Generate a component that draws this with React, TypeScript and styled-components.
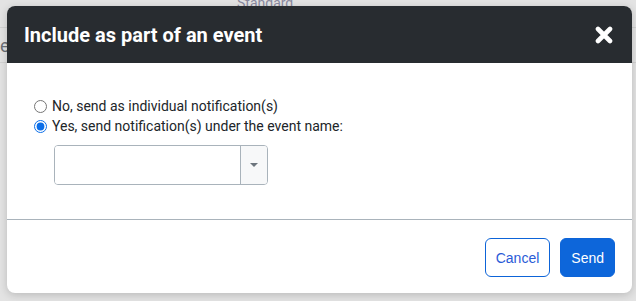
import React from "react";
import styled, { createGlobalStyle } from "styled-components";

const Global = createGlobalStyle`
  html, body { margin: 0; padding: 0; }
  body {
    background: #e3e3e3;
    font-family: Roboto, "Liberation Sans", Arial, sans-serif;
    overflow: hidden;
  }
`;

const Page = styled.div`
  position: relative;
  width: 636px;
  height: 301px;
  overflow: hidden;
  background: #e3e3e3;
`;

const PageHeader = styled.div`
  display: flex;
  height: 27px;
  border-bottom: 1px solid #d2d2d2;
  padding-left: 237px;
`;

const PageHeading = styled.div`
  font-size: 14px;
  color: #8a8aa0;
  margin-top: -5px;
  line-height: 16px;
`;

const PageRow = styled.div`
  height: 34px;
  border-bottom: 1px solid #d2d2d2;
  display: flex;
  align-items: center;
  font-size: 18px;
  color: #6b6f75;
`;

const Modal = styled.div`
  position: absolute;
  left: 7px;
  top: 6px;
  width: 625px;
  height: 287px;
  background: #ffffff;
  border-radius: 8px;
  box-shadow: 0 2px 8px rgba(0, 0, 0, 0.18);
  display: flex;
  flex-direction: column;
  overflow: hidden;
`;

const Header = styled.div`
  height: 57px;
  flex: none;
  background: #282c30;
  display: flex;
  align-items: center;
  justify-content: space-between;
  padding: 0 19px 0 17px;
`;

const Title = styled.h2`
  margin: 0;
  font-size: 20px;
  font-weight: 700;
  color: #ffffff;
`;

const CloseButton = styled.button`
  border: none;
  background: transparent;
  padding: 0;
  width: 19px;
  height: 19px;
  display: flex;
  align-items: center;
  justify-content: center;
  cursor: pointer;
`;

const Body = styled.div`
  flex: none;
  height: 157px;
  padding: 33px 0 0 26px;
  box-sizing: border-box;
  border-bottom: 1px solid #a9b3bb;
`;

const RadioRow = styled.label`
  display: flex;
  align-items: center;
  height: 20px;
  font-size: 14px;
  color: #212529;
`;

const Radio = styled.input`
  margin: 0 5px 0 1px;
  width: 13px;
  height: 13px;
  accent-color: #0b6ee8;
`;

const SelectBox = styled.div`
  margin: 9px 0 0 21px;
  width: 214px;
  height: 40px;
  box-sizing: border-box;
  border: 1px solid #a9b3bb;
  border-radius: 4px;
  display: flex;
  overflow: hidden;
`;

const SelectValue = styled.div`
  flex: 1;
  background: #ffffff;
`;

const SelectToggle = styled.div`
  width: 26px;
  border-left: 1px solid #a9b3bb;
  background: #f7f8f9;
  display: flex;
  align-items: center;
  justify-content: center;
`;

const Caret = styled.span`
  width: 0;
  height: 0;
  border-left: 4px solid transparent;
  border-right: 4px solid transparent;
  border-top: 4px solid #6c757d;
`;

const Footer = styled.div`
  flex: 1;
  display: flex;
  justify-content: flex-end;
  align-items: flex-start;
  gap: 10px;
  padding: 18px 17px 0 0;
`;

const Button = styled.button<{ $primary?: boolean }>`
  height: 39px;
  box-sizing: border-box;
  padding: 0 10px;
  border-radius: 6px;
  font-family: "Liberation Sans", Arial, sans-serif;
  font-size: 14px;
  border: 1px solid #0d64d8;
  background: ${(p) => (p.$primary ? "#0d66da" : "#ffffff")};
  color: ${(p) => (p.$primary ? "#ffffff" : "#2a5bd7")};
  cursor: pointer;
`;

export default function App() {
  return (
    <Page>
      <Global />
      <PageHeader>
        <PageHeading>Standard</PageHeading>
      </PageHeader>
      <PageRow>e</PageRow>
      <Modal>
        <Header>
          <Title>Include as part of an event</Title>
          <CloseButton aria-label="Close">
            <svg width="18" height="18" viewBox="0 0 18 18">
              <path
                d="M3 3 L15 15 M15 3 L3 15"
                stroke="#ffffff"
                strokeWidth="4.6"
                strokeLinecap="round"
              />
            </svg>
          </CloseButton>
        </Header>
        <Body>
          <RadioRow>
            <Radio type="radio" name="evt" />
            No, send as individual notification(s)
          </RadioRow>
          <RadioRow>
            <Radio type="radio" name="evt" defaultChecked />
            Yes, send notification(s) under the event name:
          </RadioRow>
          <SelectBox>
            <SelectValue />
            <SelectToggle>
              <Caret />
            </SelectToggle>
          </SelectBox>
        </Body>
        <Footer>
          <Button>Cancel</Button>
          <Button $primary>Send</Button>
        </Footer>
      </Modal>
    </Page>
  );
}
